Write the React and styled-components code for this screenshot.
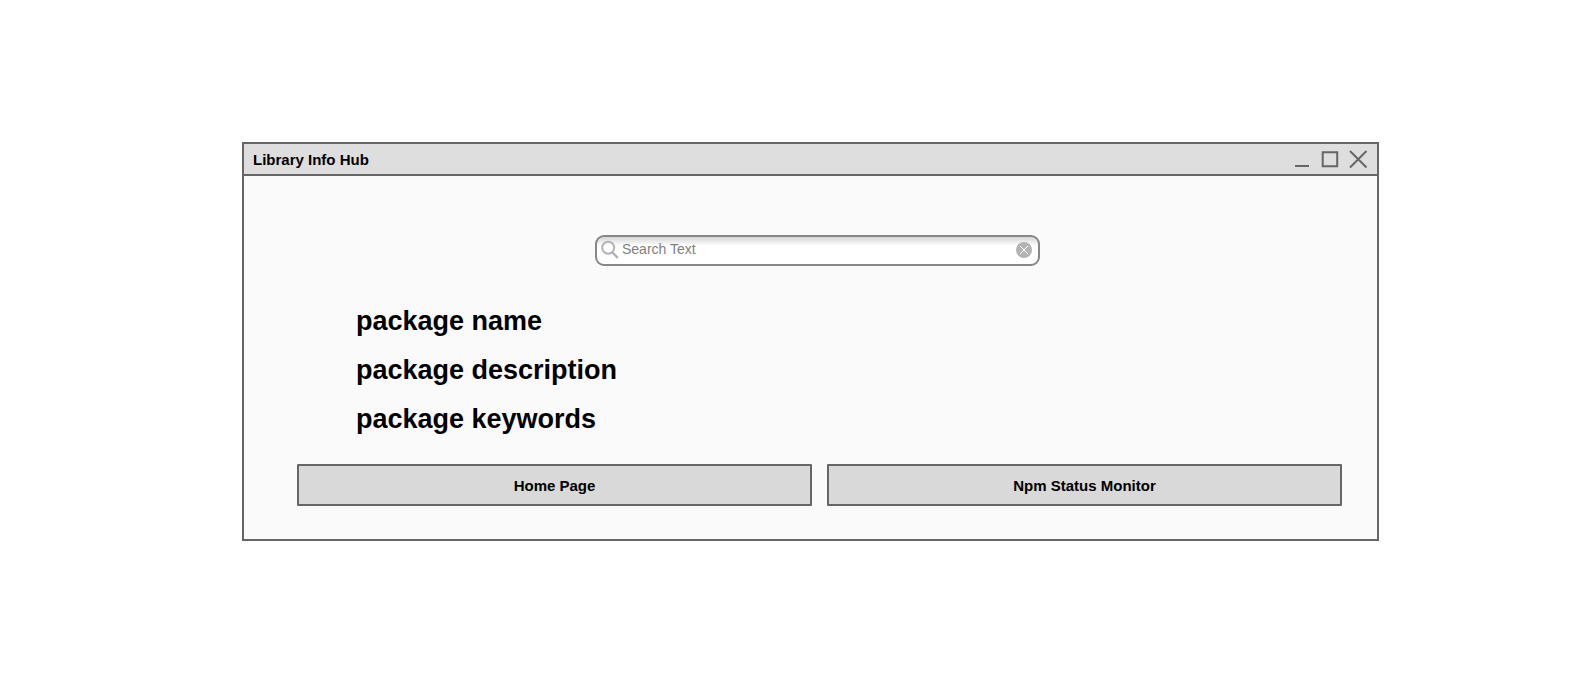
import React, { useState } from "react";
import styled, { createGlobalStyle } from "styled-components";

const GlobalStyle = createGlobalStyle`
  *, *::before, *::after { box-sizing: border-box; }
  body {
    margin: 0;
    background: #ffffff;
    color: #000000;
    font-family: "Liberation Sans", Arial, sans-serif;
  }
`;

const Page = styled.div`
  padding: 142px 203px 40px 242px;
`;

const Window = styled.main`
  display: flex;
  flex-direction: column;
  border: 2px solid #666666;
  background: #fafafa;
`;

const TitleBar = styled.header`
  display: flex;
  align-items: center;
  justify-content: space-between;
  height: 32px;
  padding: 0 9px;
  border-bottom: 2px solid #666666;
  background: #dedede;
`;

const Title = styled.h1`
  margin: 0;
  font-size: 15px;
  line-height: 22px;
  padding-top: 2px;
  font-weight: bold;
`;

const WindowControls = styled.div`
  display: flex;
  gap: 8px;
`;

const WindowButton = styled.button`
  display: flex;
  width: 20px;
  height: 20px;
  padding: 0;
  border: 0;
  background: transparent;
  color: #666666;
  cursor: pointer;
`;

const Content = styled.div`
  display: flex;
  flex-direction: column;
  padding: 59px 35px 33px 53px;
`;

const SearchRow = styled.form`
  display: flex;
  justify-content: center;
  padding-right: 4px;
`;

const SearchBox = styled.div`
  display: flex;
  align-items: flex-start;
  width: 100%;
  max-width: 445px;
  height: 31px;
  padding: 0 6px 0 4px;
  border: 2px solid #85878b;
  border-radius: 9px;
  background: linear-gradient(#d6d6d6, #ffffff 9px);
`;

const SearchIcon = styled.svg`
  margin-top: 3px;
`;

const SearchInput = styled.input`
  flex: 1;
  min-width: 0;
  height: 24px;
  padding: 0 0 1px;
  border: 0;
  outline: 0;
  background: transparent;
  color: #808080;
  font-family: inherit;
  font-size: 14px;
  &::placeholder { color: #808080; opacity: 1; }
`;

const ClearButton = styled.button`
  display: flex;
  margin-top: 5px;
  padding: 0;
  border: 0;
  background: transparent;
  cursor: pointer;
`;

const PackageInfo = styled.section`
  padding: 31px 0 20px 59px;
`;

const PackageField = styled.h2`
  margin: 0;
  font-size: 27px;
  line-height: 49px;
  font-weight: bold;
`;

const Actions = styled.div`
  display: grid;
  grid-template-columns: 1fr 1fr;
  gap: 15px;
`;

const ActionButton = styled.button`
  height: 42px;
  padding: 0;
  border: 2px solid #666666;
  border-radius: 1px;
  background: #d9d9d9;
  color: #000000;
  font-family: inherit;
  font-size: 15px;
  font-weight: bold;
  cursor: pointer;
`;

const controls = [
  { label: "Minimize", path: "M3 17H17" },
  { label: "Maximize", path: "M2.7 3.2H17.2V17.2H2.7Z" },
  { label: "Close", path: "M2 2L18.5 18.5M18.5 2L2 18.5" },
];

const fields = ["package name", "package description", "package keywords"];

export default function App() {
  const [query, setQuery] = useState("");
  return (
    <>
      <GlobalStyle />
      <Page>
        <Window>
          <TitleBar>
            <Title>Library Info Hub</Title>
            <WindowControls>
              {controls.map(({ label, path }) => (
                <WindowButton key={label} type="button" aria-label={label}>
                  <svg width="20" height="20" viewBox="0 0 20 20" fill="none" stroke="currentColor" strokeWidth="2" aria-hidden="true">
                    <path d={path} />
                  </svg>
                </WindowButton>
              ))}
            </WindowControls>
          </TitleBar>
          <Content>
            <SearchRow role="search" onSubmit={(e) => e.preventDefault()}>
              <SearchBox>
                <SearchIcon width="21" height="20" viewBox="0 0 21 20" fill="none" stroke="#b3b3b3" strokeWidth="2" aria-hidden="true">
                  <circle cx="7.2" cy="7.7" r="6" />
                  <path d="M11.2 12.2L16.8 18" strokeWidth="2.4" />
                </SearchIcon>
                <SearchInput
                  type="text"
                  aria-label="Search Text"
                  placeholder="Search Text"
                  value={query}
                  onChange={(e) => setQuery(e.target.value)}
                />
                <ClearButton type="button" aria-label="Clear search" onClick={() => setQuery("")}>
                  <svg width="16" height="16" viewBox="0 0 16 16" fill="none" aria-hidden="true">
                    <circle cx="8" cy="8" r="8" fill="#b3b3b3" />
                    <path d="M4 4L12 12M12 4L4 12" stroke="#ffffff" />
                  </svg>
                </ClearButton>
              </SearchBox>
            </SearchRow>
            <PackageInfo>
              {fields.map((field) => (
                <PackageField key={field}>{field}</PackageField>
              ))}
            </PackageInfo>
            <Actions>
              <ActionButton type="button">Home Page</ActionButton>
              <ActionButton type="button">Npm Status Monitor</ActionButton>
            </Actions>
          </Content>
        </Window>
      </Page>
    </>
  );
}
